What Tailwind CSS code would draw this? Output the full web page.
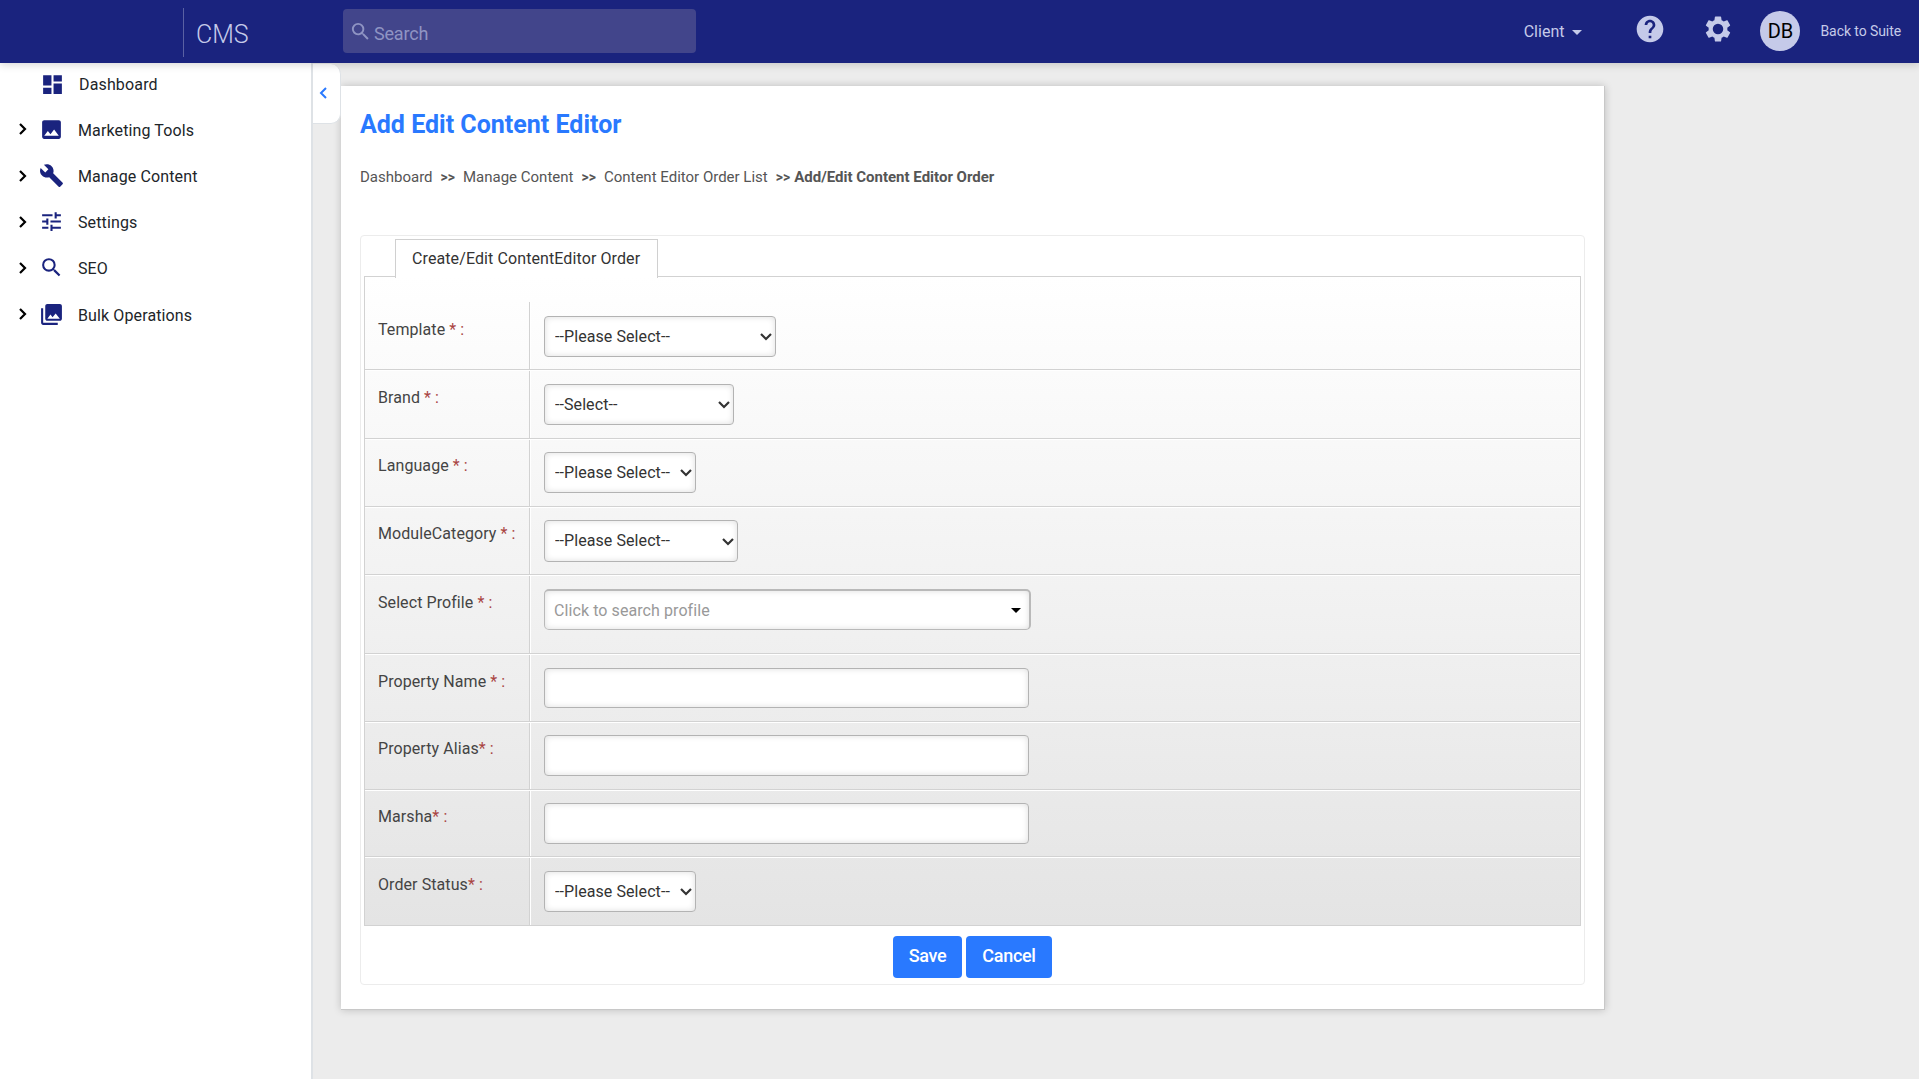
<!DOCTYPE html>
<html lang="en">
<head>
  <meta charset="UTF-8" />
  <title>Add Edit Content Editor</title>
  <script src="https://cdn.jsdelivr.net/npm/@tailwindcss/browser@4"></script>
</head>
<body class="bg-[#ececec] font-[Roboto,sans-serif] text-base text-[#212529] h-screen overflow-hidden flex flex-col">

  <!-- Top bar -->
  <header class="relative z-10 h-[63px] shrink-0 bg-[#1a237e] text-[#c5cae9] flex items-start shadow-[0_2px_8px_rgba(0,0,0,0.16)]">
    <div class="ml-[183px] mt-2 h-[49px] w-[160px] border-l border-[#5a61a3] pl-3 pt-[11px] text-[25px] leading-8 font-light">CMS</div>
    <div class="mt-[9px] w-[353px] h-11 rounded bg-[#42458b] flex items-start text-[#8f94c3]">
      <svg class="w-[23px] h-[23px] ml-1.5 mt-[11px]" viewBox="0 0 24 24" fill="currentColor"><path d="M15.5 14h-.79l-.28-.27A6.47 6.47 0 0 0 16 9.5 6.5 6.5 0 1 0 9.5 16c1.61 0 3.09-.59 4.23-1.57l.27.28v.79l5 4.99L20.49 19l-4.99-5zm-6 0C7.01 14 5 11.99 5 9.5S7.01 5 9.5 5 14 7.01 14 9.5 11.99 14 9.5 14z"/></svg>
      <span class="ml-[2px] mt-[13px] text-lg leading-6 tracking-[-0.2px]">Search</span>
    </div>
    <div class="ml-auto mt-5 flex items-center text-base leading-6">
      Client
      <span class="ml-2 mt-px border-x-[5px] border-x-transparent border-t-[5px] border-t-[#c5cae9]"></span>
    </div>
    <svg class="w-8 h-8 ml-[52px] mt-[13px]" viewBox="0 0 24 24" fill="currentColor"><path d="M12 2C6.48 2 2 6.48 2 12s4.48 10 10 10 10-4.48 10-10S17.52 2 12 2zm1 17h-2v-2h2v2zm2.07-7.75-.9.92C13.45 12.9 13 13.5 13 15h-2v-.5c0-1.1.45-2.1 1.17-2.83l1.24-1.26c.37-.36.59-.86.59-1.41 0-1.1-.9-2-2-2s-2 .9-2 2H8c0-2.21 1.79-4 4-4s4 1.79 4 4c0 .88-.36 1.68-.93 2.25z"/></svg>
    <svg class="w-[30px] h-[30px] ml-[37px] mt-[14px]" viewBox="0 0 24 24" fill="currentColor"><path d="M19.43 12.98c.04-.32.07-.64.07-.98s-.03-.66-.07-.98l2.11-1.65c.19-.15.24-.42.12-.64l-2-3.46c-.12-.22-.39-.3-.61-.22l-2.49 1c-.52-.4-1.08-.73-1.69-.98l-.38-2.65A.488.488 0 0 0 14 2h-4c-.25 0-.46.18-.49.42l-.38 2.65c-.61.25-1.17.59-1.69.98l-2.49-1c-.23-.09-.49 0-.61.22l-2 3.46c-.13.22-.07.49.12.64l2.11 1.65c-.04.32-.07.65-.07.98s.03.66.07.98l-2.11 1.65c-.19.15-.24.42-.12.64l2 3.46c.12.22.39.3.61.22l2.49-1c.52.4 1.08.73 1.69.98l.38 2.65c.03.24.24.42.49.42h4c.25 0 .46-.18.49-.42l.38-2.65c.61-.25 1.17-.59 1.69-.98l2.49 1c.23.09.49 0 .61-.22l2-3.46c.12-.22.07-.49-.12-.64l-2.11-1.65zM12 16.2a4.2 4.2 0 1 1 0-8.4 4.2 4.2 0 0 1 0 8.4z"/></svg>
    <div class="ml-[27px] mt-[11px] w-10 h-10 rounded-full bg-[#c5cae9] text-black text-xl flex items-center justify-center">DB</div>
    <div class="ml-5 mr-[18px] mt-5 text-sm leading-[22px] tracking-[-0.08px]">Back to Suite</div>
  </header>

  <div class="flex flex-1">
    <!-- Side menu -->
    <nav class="w-[313px] shrink-0 bg-white border-r-2 border-[#dee2e6] text-[#1a237e]">
      <a class="flex items-center h-[42px]">
        <svg class="w-[25px] h-[25px] ml-10" viewBox="0 0 24 24" fill="currentColor"><path d="M3 13h8V3H3v10zm0 8h8v-6H3v6zm10 0h8V11h-8v10zm0-18v6h8V3h-8z"/></svg>
        <span class="ml-3.5 pt-px text-[#212529] tracking-[0.15px]">Dashboard</span>
      </a>
      <a class="flex items-center h-[46px] mt-px">
        <svg class="w-2 h-3 ml-[19px]" viewBox="0 0 8 12" fill="none" stroke="#000" stroke-width="2.2"><path d="M1 1l5 5-5 5"/></svg>
        <svg class="w-[25px] h-[25px] ml-3" viewBox="0 0 24 24" fill="currentColor"><path d="M21 19V5c0-1.1-.9-2-2-2H5c-1.1 0-2 .9-2 2v14c0 1.1.9 2 2 2h14c1.1 0 2-.9 2-2zM8.5 13.5l2.5 3.01L14.5 12l4.5 6H5l3.5-4.5z"/></svg>
        <span class="ml-3.5 pt-[3px] text-[#212529] tracking-[0.12px]">Marketing Tools</span>
      </a>
      <a class="flex items-center h-[46px]">
        <svg class="w-2 h-3 ml-[19px] mt-px" viewBox="0 0 8 12" fill="none" stroke="#000" stroke-width="2.2"><path d="M1 1l5 5-5 5"/></svg>
        <svg class="w-[25px] h-[25px] ml-3" viewBox="0 0 24 24" fill="currentColor"><path d="M22.7 19l-9.1-9.1c.9-2.3.4-5-1.5-6.9-2-2-5-2.4-7.4-1.3L9 6 6 9 1.6 4.7C.4 7.1.9 10.1 2.9 12.100c1.9 1.900 4.600 2.400 6.900 1.500l9.100 9.100c.4.4 1 .4 1.400 0l2.300-2.300c.5-.4.5-1.100.1-1.400z"/></svg>
        <span class="ml-3.5 pt-[3px] text-[#212529] tracking-[0.12px]">Manage Content</span>
      </a>
      <a class="flex items-center h-[46px]">
        <svg class="w-2 h-3 ml-[19px] mt-px" viewBox="0 0 8 12" fill="none" stroke="#000" stroke-width="2.2"><path d="M1 1l5 5-5 5"/></svg>
        <svg class="w-[25px] h-[25px] ml-3 mt-px" viewBox="0 0 24 24" fill="currentColor"><path d="M3 17v2h6v-2H3zM3 5v2h10V5H3zm10 16v-2h8v-2h-8v-2h-2v6h2zM7 9v2H3v2h4v2h2V9H7zm14 4v-2H11v2h10zm-6-4h2V7h4V5h-4V3h-2v6z"/></svg>
        <span class="ml-3.5 pt-[3px] text-[#212529] tracking-[0.12px]">Settings</span>
      </a>
      <a class="flex items-center h-[46px]">
        <svg class="w-2 h-3 ml-[19px] mt-px" viewBox="0 0 8 12" fill="none" stroke="#000" stroke-width="2.2"><path d="M1 1l5 5-5 5"/></svg>
        <svg class="w-[25px] h-[25px] ml-3 mt-px" viewBox="0 0 24 24" fill="currentColor"><path d="M15.5 14h-.79l-.28-.27A6.47 6.47 0 0 0 16 9.5 6.5 6.5 0 1 0 9.5 16c1.61 0 3.09-.59 4.23-1.57l.27.28v.79l5 4.99L20.49 19l-4.99-5zm-6 0C7.01 14 5 11.99 5 9.5S7.01 5 9.5 5 14 7.01 14 9.5 11.99 14 9.5 14z"/></svg>
        <span class="ml-3.5 pt-[3px] text-[#212529] tracking-[0.12px]">SEO</span>
      </a>
      <a class="flex items-center h-[47px]">
        <svg class="w-2 h-3 ml-[19px] mt-px" viewBox="0 0 8 12" fill="none" stroke="#000" stroke-width="2.2"><path d="M1 1l5 5-5 5"/></svg>
        <svg class="w-[25px] h-[25px] ml-3 mt-px" viewBox="0 0 24 24" fill="currentColor"><path d="M22 16V4c0-1.1-.9-2-2-2H8c-1.1 0-2 .9-2 2v12c0 1.1.9 2 2 2h12c1.1 0 2-.9 2-2zm-11-4l2.03 2.71L16 11l4 5H8l3-4zM2 6v14c0 1.1.9 2 2 2h14v-2H4V6H2z"/></svg>
        <span class="ml-3.5 pt-1 text-[#212529] tracking-[0.12px]">Bulk Operations</span>
      </a>
    </nav>

    <!-- Collapse handle -->
    <div class="z-[1] w-7 h-[60px] mt-px shrink-0 bg-white border-r border-b border-[#dee2e6] rounded-r-[10px]">
      <svg class="w-2 h-3 ml-[6px] mt-[23px]" viewBox="0 0 8 12" fill="none" stroke="#2979ff" stroke-width="2"><path d="M7 1L2 6l5 5"/></svg>
    </div>

    <main class="mt-[23px] w-[1264px] h-[924px] bg-white border-r border-b border-[#c8c8c8] shadow-[0_0_8px_rgba(0,0,0,0.2)] px-[19px]">
      <h1 class="mt-[23px] text-[25px] leading-8 font-bold text-[#2979ff]">Add Edit Content Editor</h1>
      <div class="mt-[26px] text-[15px] leading-5 text-[#555] whitespace-pre flex">
        <span>Dashboard</span><b class="mx-2 text-sm leading-5">&gt;&gt;</b><span>Manage Content</span><b class="mx-2 text-sm leading-5">&gt;&gt;</b><span>Content Editor Order List</span><b class="ml-2 mr-1 text-sm leading-5">&gt;&gt;</b><b>Add/Edit Content Editor Order</b>
      </div>

      <section class="mt-12 h-[750px] border border-[#ececec] rounded px-[3px] pt-[3px]">
        <div class="relative z-[1] ml-[31px] -mb-[2px] w-[263px] h-[39px] bg-white border border-b-0 border-[#d0d0d0] pl-4 pt-[7px] leading-6 text-[#333] whitespace-nowrap tracking-[0.1px]">Create/Edit ContentEditor Order</div>

        <div class="w-[1217px] h-[650px] border border-[#d2d2d2] bg-linear-to-b from-white to-[#e4e4e4] pt-[25px] text-[#444] leading-6 tracking-[0.08px]">
          <div class="flex h-[68px] border-b border-[#d2d2d2]">
            <div class="w-[165px] border-r border-[#d2d2d2] pl-[13px] pt-4">Template <span class="text-[#a94442]">* :</span></div>
            <div class="flex-1 border-l border-white pl-[13px] pt-3.5">
              <div class="relative w-[232px]">
                <select class="block appearance-none w-full h-[41px] pl-2.5 bg-white border border-[#b3b3b3] rounded text-[#333] shadow-[inset_0_0_6px_#ddd]"><option>--Please Select--</option></select>
                <svg class="absolute right-1 top-[17px] w-3 h-2" viewBox="0 0 12 8" fill="none" stroke="#333" stroke-width="2.2"><path d="M1 1l5 5 5-5"/></svg>
              </div>
            </div>
          </div>
          <div class="flex h-[69px] border-t border-t-white border-b border-b-[#d2d2d2]">
            <div class="w-[165px] border-r border-[#d2d2d2] pl-[13px] pt-[15px]">Brand <span class="text-[#a94442]">* :</span></div>
            <div class="flex-1 border-l border-white pl-[13px] pt-[13px]">
              <div class="relative w-[190px]">
                <select class="block appearance-none w-full h-[41px] pl-2.5 bg-white border border-[#b3b3b3] rounded text-[#333] shadow-[inset_0_0_6px_#ddd]"><option>--Select--</option></select>
                <svg class="absolute right-1 top-[17px] w-3 h-2" viewBox="0 0 12 8" fill="none" stroke="#333" stroke-width="2.2"><path d="M1 1l5 5 5-5"/></svg>
              </div>
            </div>
          </div>
          <div class="flex h-[68px] border-t border-t-white border-b border-b-[#d2d2d2]">
            <div class="w-[165px] border-r border-[#d2d2d2] pl-[13px] pt-[14px]">Language <span class="text-[#a94442]">* :</span></div>
            <div class="flex-1 border-l border-white pl-[13px] pt-3">
              <div class="relative w-[152px]">
                <select class="block appearance-none w-full h-[41px] pl-2.5 bg-white border border-[#b3b3b3] rounded text-[#333] shadow-[inset_0_0_6px_#ddd]"><option>--Please Select--</option></select>
                <svg class="absolute right-1 top-[17px] w-3 h-2" viewBox="0 0 12 8" fill="none" stroke="#333" stroke-width="2.2"><path d="M1 1l5 5 5-5"/></svg>
              </div>
            </div>
          </div>
          <div class="flex h-[68px] border-t border-t-white border-b border-b-[#d2d2d2]">
            <div class="w-[165px] border-r border-[#d2d2d2] pl-[13px] pt-[14px] whitespace-nowrap">ModuleCategory <span class="text-[#a94442]">* :</span></div>
            <div class="flex-1 border-l border-white pl-[13px] pt-3">
              <div class="relative w-[194px]">
                <select class="block appearance-none w-full h-[42px] pl-2.5 bg-white border border-[#b3b3b3] rounded text-[#333] shadow-[inset_0_0_6px_#ddd]"><option>--Please Select--</option></select>
                <svg class="absolute right-1 top-[18px] w-3 h-2" viewBox="0 0 12 8" fill="none" stroke="#333" stroke-width="2.2"><path d="M1 1l5 5 5-5"/></svg>
              </div>
            </div>
          </div>
          <div class="flex h-[79px] border-t border-t-white border-b border-b-[#d2d2d2]">
            <div class="w-[165px] border-r border-[#d2d2d2] pl-[13px] pt-[15px]">Select Profile <span class="text-[#a94442]">* :</span></div>
            <div class="flex-1 border-l border-white pl-[13px] pt-[13px]">
              <div class="w-[487px] h-[41px] pl-[9px] pr-2 bg-white border border-t-2 border-r-2 border-[#b9b9b9] rounded-[5px] text-[#999] shadow-[inset_0_0_6px_#ddd] flex items-center justify-between">
                <span class="pt-px">Click to search profile</span>
                <span class="border-x-[5px] border-x-transparent border-t-[5px] border-t-black"></span>
              </div>
            </div>
          </div>
          <div class="flex h-[68px] border-t border-t-white border-b border-b-[#d2d2d2]">
            <div class="w-[165px] border-r border-[#d2d2d2] pl-[13px] pt-[15px]">Property Name <span class="text-[#a94442]">* :</span></div>
            <div class="flex-1 border-l border-white pl-[13px] pt-[13px]"><input type="text" class="w-[485px] h-10 bg-white border border-[#b3b3b3] rounded shadow-[inset_0_0_6px_#ddd]" /></div>
          </div>
          <div class="flex h-[68px] border-t border-t-white border-b border-b-[#d2d2d2]">
            <div class="w-[165px] border-r border-[#d2d2d2] pl-[13px] pt-[14px]">Property Alias<span class="text-[#a94442]">* :</span></div>
            <div class="flex-1 border-l border-white pl-[13px] pt-3"><input type="text" class="w-[485px] h-[41px] bg-white border border-[#b3b3b3] rounded shadow-[inset_0_0_6px_#ddd]" /></div>
          </div>
          <div class="flex h-[67px] border-t border-t-white border-b border-b-[#d2d2d2]">
            <div class="w-[165px] border-r border-[#d2d2d2] pl-[13px] pt-[14px]">Marsha<span class="text-[#a94442]">* :</span></div>
            <div class="flex-1 border-l border-white pl-[13px] pt-3"><input type="text" class="w-[485px] h-[41px] bg-white border border-[#b3b3b3] rounded shadow-[inset_0_0_6px_#ddd]" /></div>
          </div>
          <div class="flex h-[68px] border-t border-t-white">
            <div class="w-[165px] border-r border-[#d2d2d2] pl-[13px] pt-[15px]">Order Status<span class="text-[#a94442]">* :</span></div>
            <div class="flex-1 border-l border-white pl-[13px] pt-[13px]">
              <div class="relative w-[152px]">
                <select class="block appearance-none w-full h-[41px] pl-2.5 bg-white border border-[#b3b3b3] rounded text-[#333] shadow-[inset_0_0_6px_#ddd]"><option>--Please Select--</option></select>
                <svg class="absolute right-1 top-[17px] w-3 h-2" viewBox="0 0 12 8" fill="none" stroke="#333" stroke-width="2.2"><path d="M1 1l5 5 5-5"/></svg>
              </div>
            </div>
          </div>
        </div>

        <div class="mt-2.5 flex justify-center gap-1 text-white text-lg tracking-[-0.3px] font-medium">
          <button class="w-[69px] h-[42px] pb-0.5 rounded bg-[#2979ff]">Save</button>
          <button class="w-[86px] h-[42px] pb-0.5 rounded bg-[#2979ff]">Cancel</button>
        </div>
      </section>
    </main>
  </div>

</body>
</html>
